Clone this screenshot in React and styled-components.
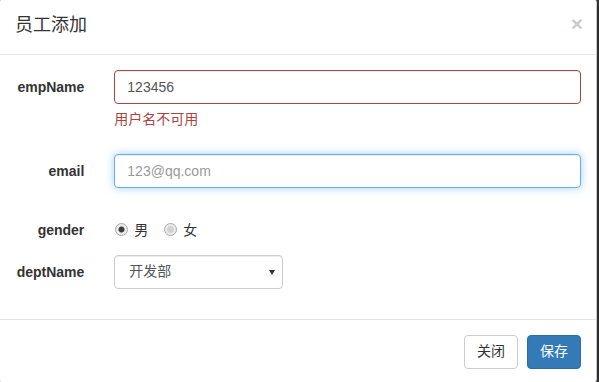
import styled, { createGlobalStyle } from 'styled-components';

const Global = createGlobalStyle`
  html, body {
    margin: 0;
    padding: 0;
    background: #3b3b3b;
    overflow: hidden;
  }
  * { box-sizing: border-box; }
  body {
    font-family: "Liberation Sans", "Noto Sans CJK SC", Arial, sans-serif;
    font-size: 14px;
    line-height: 1.42857;
    color: #333;
  }
`;

const Modal = styled.div`
  width: 598px;
  margin: -3px 0 0 -1px;
  background: #fff;
  border: 1px solid rgba(0, 0, 0, 0.2);
  border-radius: 6px;
  box-shadow: 0 3px 9px rgba(0, 0, 0, 0.5);
`;

const Header = styled.div`
  display: flex;
  align-items: flex-start;
  justify-content: space-between;
  padding: 15px;
  border-bottom: 1px solid #e5e5e5;
`;

const Title = styled.h4`
  margin: 0;
  font-size: 18px;
  font-weight: 400;
  line-height: 1.42857;
  color: #333;
`;

const Close = styled.button`
  padding: 0;
  margin: 0 -2px 0 0;
  border: 0;
  background: transparent;
  font-family: "Liberation Sans", Arial, sans-serif;
  font-size: 21px;
  font-weight: bold;
  line-height: 1;
  color: #000;
  opacity: 0.2;
  cursor: pointer;
`;

const Body = styled.div`
  padding: 15px;
`;

const Row = styled.div`
  display: grid;
  grid-template-columns: 16.6667% ${(p) => (p.$narrow ? '33.3333%' : '83.3333%')};
  margin: 0 -15px ${(p) => p.$mb ?? 15}px;
`;

const Label = styled.label`
  padding: 7px 15px 0;
  text-align: right;
  font-weight: bold;
  line-height: 20px;
`;

const Field = styled.div`
  padding: 0 15px;
`;

const Input = styled.input`
  display: block;
  width: 100%;
  height: 34px;
  padding: 6px 12px;
  font: inherit;
  font-size: 14px;
  line-height: 1.42857;
  color: #555;
  background: #fff;
  border: 1px solid ${(p) => (p.$error ? '#a94442' : p.$focus ? '#66afe9' : '#ccc')};
  border-radius: 4px;
  outline: 0;
  box-shadow: ${(p) =>
    p.$focus
      ? 'inset 0 1px 1px rgba(0,0,0,.075), 0 0 8px rgba(102,175,233,.6)'
      : 'inset 0 1px 1px rgba(0,0,0,.075)'};
  &::placeholder { color: #999; }
`;

const Help = styled.span`
  display: block;
  margin: 5px 0 10px;
  color: #a94442;
  line-height: 20px;
`;

const Radios = styled.div`
  display: flex;
  align-items: center;
  gap: 15px;
  padding-top: 7px;
  height: 27px;
`;

const RadioLabel = styled.label`
  display: flex;
  align-items: center;
  gap: 6px;
  line-height: 20px;
  color: #333;
`;

const Radio = styled.input`
  appearance: none;
  margin: 0 0 0 1px;
  width: 13px;
  height: 13px;
  border-radius: 50%;
  border: 1px solid #a9a9a9;
  background: ${(p) =>
    p.$on
      ? 'radial-gradient(circle, #3c3c3c 0 2.5px, #ececec 3.5px)'
      : 'radial-gradient(circle, #d2d2d2 0 3px, #ececec 4px)'};
`;

const SelectWrap = styled.div`
  position: relative;
  &::after {
    content: '';
    position: absolute;
    right: 8px;
    top: 15px;
    border-left: 3px solid transparent;
    border-right: 3px solid transparent;
    border-top: 5px solid #333;
  }
`;

const Select = styled.select`
  appearance: none;
  display: block;
  width: 100%;
  height: 34px;
  padding: 6px 12px 6px 14px;
  font: inherit;
  font-size: 14px;
  color: #555;
  background: #fff;
  border: 1px solid #ccc;
  border-radius: 4px;
  box-shadow: inset 0 1px 1px rgba(0,0,0,.075);
`;

const Footer = styled.div`
  display: flex;
  justify-content: flex-end;
  gap: 9px;
  padding: 15px;
  border-top: 1px solid #e5e5e5;
`;

const Button = styled.button`
  height: 34px;
  padding: 6px 12px;
  font: inherit;
  font-size: 14px;
  line-height: 1.42857;
  border-radius: 4px;
  border: 1px solid ${(p) => (p.$primary ? '#2e6da4' : '#ccc')};
  background: ${(p) => (p.$primary ? '#337ab7' : '#fff')};
  color: ${(p) => (p.$primary ? '#fff' : '#333')};
`;

export default function App() {
  return (
    <>
      <Global />
      <Modal>
        <Header>
          <Title>员工添加</Title>
          <Close>×</Close>
        </Header>
        <Body>
          <Row $mb={15}>
            <Label>empName</Label>
            <Field>
              <Input $error defaultValue="123456" />
              <Help>用户名不可用</Help>
            </Field>
          </Row>
          <Row $mb={25}>
            <Label>email</Label>
            <Field>
              <Input $focus placeholder="123@qq.com" />
            </Field>
          </Row>
          <Row>
            <Label>gender</Label>
            <Field>
              <Radios>
                <RadioLabel>
                  <Radio type="radio" name="gender" $on defaultChecked />男
                </RadioLabel>
                <RadioLabel>
                  <Radio type="radio" name="gender" />女
                </RadioLabel>
              </Radios>
            </Field>
          </Row>
          <Row $narrow>
            <Label>deptName</Label>
            <Field>
              <SelectWrap>
                <Select defaultValue="1">
                  <option value="1">开发部</option>
                  <option value="2">测试部</option>
                </Select>
              </SelectWrap>
            </Field>
          </Row>
        </Body>
        <Footer>
          <Button>关闭</Button>
          <Button $primary>保存</Button>
        </Footer>
      </Modal>
    </>
  );
}
